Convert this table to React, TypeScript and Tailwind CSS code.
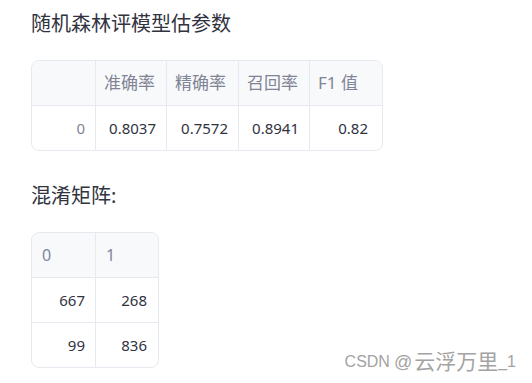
import React from 'react';

const sans = 'font-["Noto_Sans","Noto_Sans_CJK_SC",sans-serif]';

const metrics = {
  headers: ['准确率', '精确率', '召回率', 'F1 值'],
  widths: ['w-[71px]', 'w-[72px]', 'w-[71px]', 'w-[69px]'],
  values: ['0.8037', '0.7572', '0.8941', '0.82'],
};

const confusion = [
  ['667', '268'],
  ['99', '836'],
];

const App: React.FC = () => {
  return (
    <div className={`relative w-[532px] h-[383px] bg-white ${sans} text-[#31333f]`}>
      <div className="pl-[31px] pt-[9px]">
        <h2 className="text-[20px] leading-[30px] font-normal">随机森林评模型估参数</h2>

        {/* metrics table */}
        <div className="mt-[21px] w-[352px] border border-[#e6e9ef] rounded-lg overflow-hidden">
          <div className="flex h-[45px] bg-[#f8f9fb] border-b border-[#e6e9ef]">
            <div className="w-[63px]" />
            {metrics.headers.map((h, i) => (
              <div
                key={h}
                className={`${metrics.widths[i]} border-l border-[#e6e9ef] flex items-center pl-2 text-[17px] text-[#808495]`}
              >
                {h}
              </div>
            ))}
          </div>
          <div className="flex h-[44px] text-[15px]">
            <div className="w-[63px] flex items-center justify-end pr-2.5 text-[#808495]">0</div>
            {metrics.values.map((v, i) => (
              <div
                key={i}
                className={`${metrics.widths[i]} border-l border-[#e6e9ef] flex items-center justify-end pr-2.5`}
              >
                {v}
              </div>
            ))}
          </div>
        </div>

        <h2 className="mt-[30px] text-[20px] leading-[30px] font-normal">混淆矩阵:</h2>

        {/* confusion matrix */}
        <div className="mt-[21px] w-[128px] border border-[#e6e9ef] rounded-lg overflow-hidden">
          <div className="flex h-[45px] bg-[#f8f9fb] border-b border-[#e6e9ef] text-[16px] text-[#7d879b]">
            <div className="w-[63px] flex items-center pl-2.5">0</div>
            <div className="w-[62px] border-l border-[#e6e9ef] flex items-center pl-2.5">1</div>
          </div>
          {confusion.map((row, r) => (
            <div
              key={r}
              className={`flex text-[15px] ${r === 0 ? 'h-[45px] border-b border-[#e6e9ef]' : 'h-[44px]'}`}
            >
              <div className="w-[63px] flex items-center justify-end pr-2.5">{row[0]}</div>
              <div className="w-[62px] border-l border-[#e6e9ef] flex items-center justify-end pr-2.5">
                {row[1]}
              </div>
            </div>
          ))}
        </div>
      </div>

      {/* watermark */}
      <div className="absolute right-[16px] top-[350px] flex items-center font-['Liberation_Sans','Noto_Sans_CJK_SC',sans-serif] text-[#a3a3a3] text-[16px] leading-[24px] whitespace-nowrap">
        <span>CSDN</span>
        <span className="ml-[4px] text-[18px]">@</span>
        <span className="ml-[2px] text-[21px]">云浮万里</span>
        <span>_1</span>
      </div>
    </div>
  );
};

export default App;
